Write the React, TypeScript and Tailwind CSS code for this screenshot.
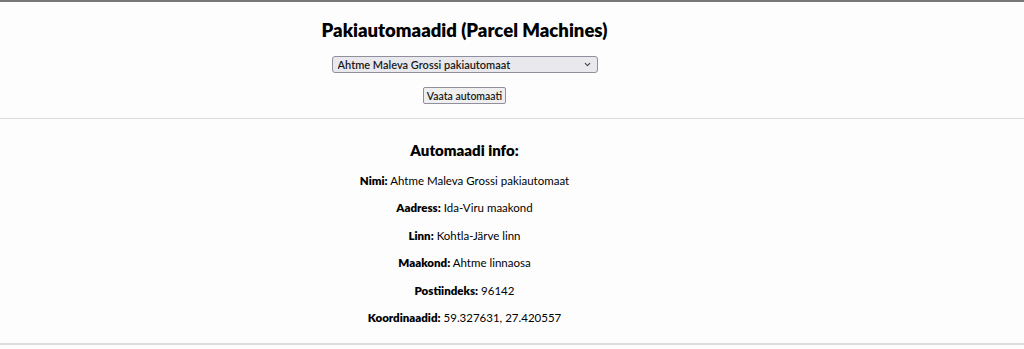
import { useState } from "react";
import { ChevronDown } from "lucide-react";

type Automaat = {
  nimi: string;
  aadress: string;
  linn: string;
  maakond: string;
  postiindeks: string;
  koordinaadid: string;
};

const automaadid: Automaat[] = [
  {
    nimi: "Ahtme Maleva Grossi pakiautomaat",
    aadress: "Ida-Viru maakond",
    linn: "Kohtla-Järve linn",
    maakond: "Ahtme linnaosa",
    postiindeks: "96142",
    koordinaadid: "59.327631, 27.420557",
  },
];

export default function App() {
  const [valitud, setValitud] = useState(0);
  const [naidatav, setNaidatav] = useState<Automaat | null>(automaadid[0]);

  const read = naidatav
    ? [
        ["Nimi", naidatav.nimi],
        ["Aadress", naidatav.aadress],
        ["Linn", naidatav.linn],
        ["Maakond", naidatav.maakond],
        ["Postiindeks", naidatav.postiindeks],
        ["Koordinaadid", naidatav.koordinaadid],
      ]
    : [];

  return (
    <main className="min-h-[349px] bg-[#fdfdfd] text-black border-t-2 border-[#787878] font-['Lato','Open_Sans',sans-serif]">
      <div className="w-[929px] text-center">
        <section className="pt-[15px] pb-[14px] flex flex-col items-center">
          <h1 className="text-[18.5px] leading-[26px] font-extrabold">Pakiautomaadid (Parcel Machines)</h1>
          <div className="relative mt-[13px]">
            <select
              value={valitud}
              onChange={(e) => setValitud(Number(e.target.value))}
              className="appearance-none block w-[266px] h-[17px] rounded-[3px] border border-[#8f8f9d] bg-[#e9e9ed] pl-[5px] text-[11px] leading-[14px] font-semibold text-[#1a1a1a] outline-none"
            >
              {automaadid.map((a, i) => (
                <option key={a.nimi} value={i}>
                  {a.nimi}
                </option>
              ))}
            </select>
            <ChevronDown
              size={9}
              strokeWidth={3}
              className="pointer-events-none absolute right-[6px] top-[4px] text-[#444]"
            />
          </div>
          <button
            type="button"
            onClick={() => setNaidatav(automaadid[valitud])}
            className="mt-[14px] h-[17px] px-[3px] whitespace-nowrap rounded-[2px] border border-[#8f8f9d] bg-[#efefef] text-[10.5px] leading-[14px] font-semibold text-[#1a1a1a]"
          >
            Vaata automaati
          </button>
        </section>
      </div>
      <div className="border-t border-[#dcdcdc]" />
      <div className="w-[929px] text-center">
        {naidatav && (
          <section className="pt-[20px] pb-[16px]">
            <h2 className="text-[15px] leading-[22px] font-extrabold">Automaadi info:</h2>
            <div className="mt-[11px] flex flex-col gap-[9.4px] text-[11.5px] leading-[18px]">
              {read.map(([silt, vaartus]) => (
                <p key={silt}>
                  <span className="font-extrabold">{silt}:</span> {vaartus}
                </p>
              ))}
            </div>
          </section>
        )}
      </div>
      <div className="border-t-2 border-[#dcdcdc]" />
    </main>
  );
}
